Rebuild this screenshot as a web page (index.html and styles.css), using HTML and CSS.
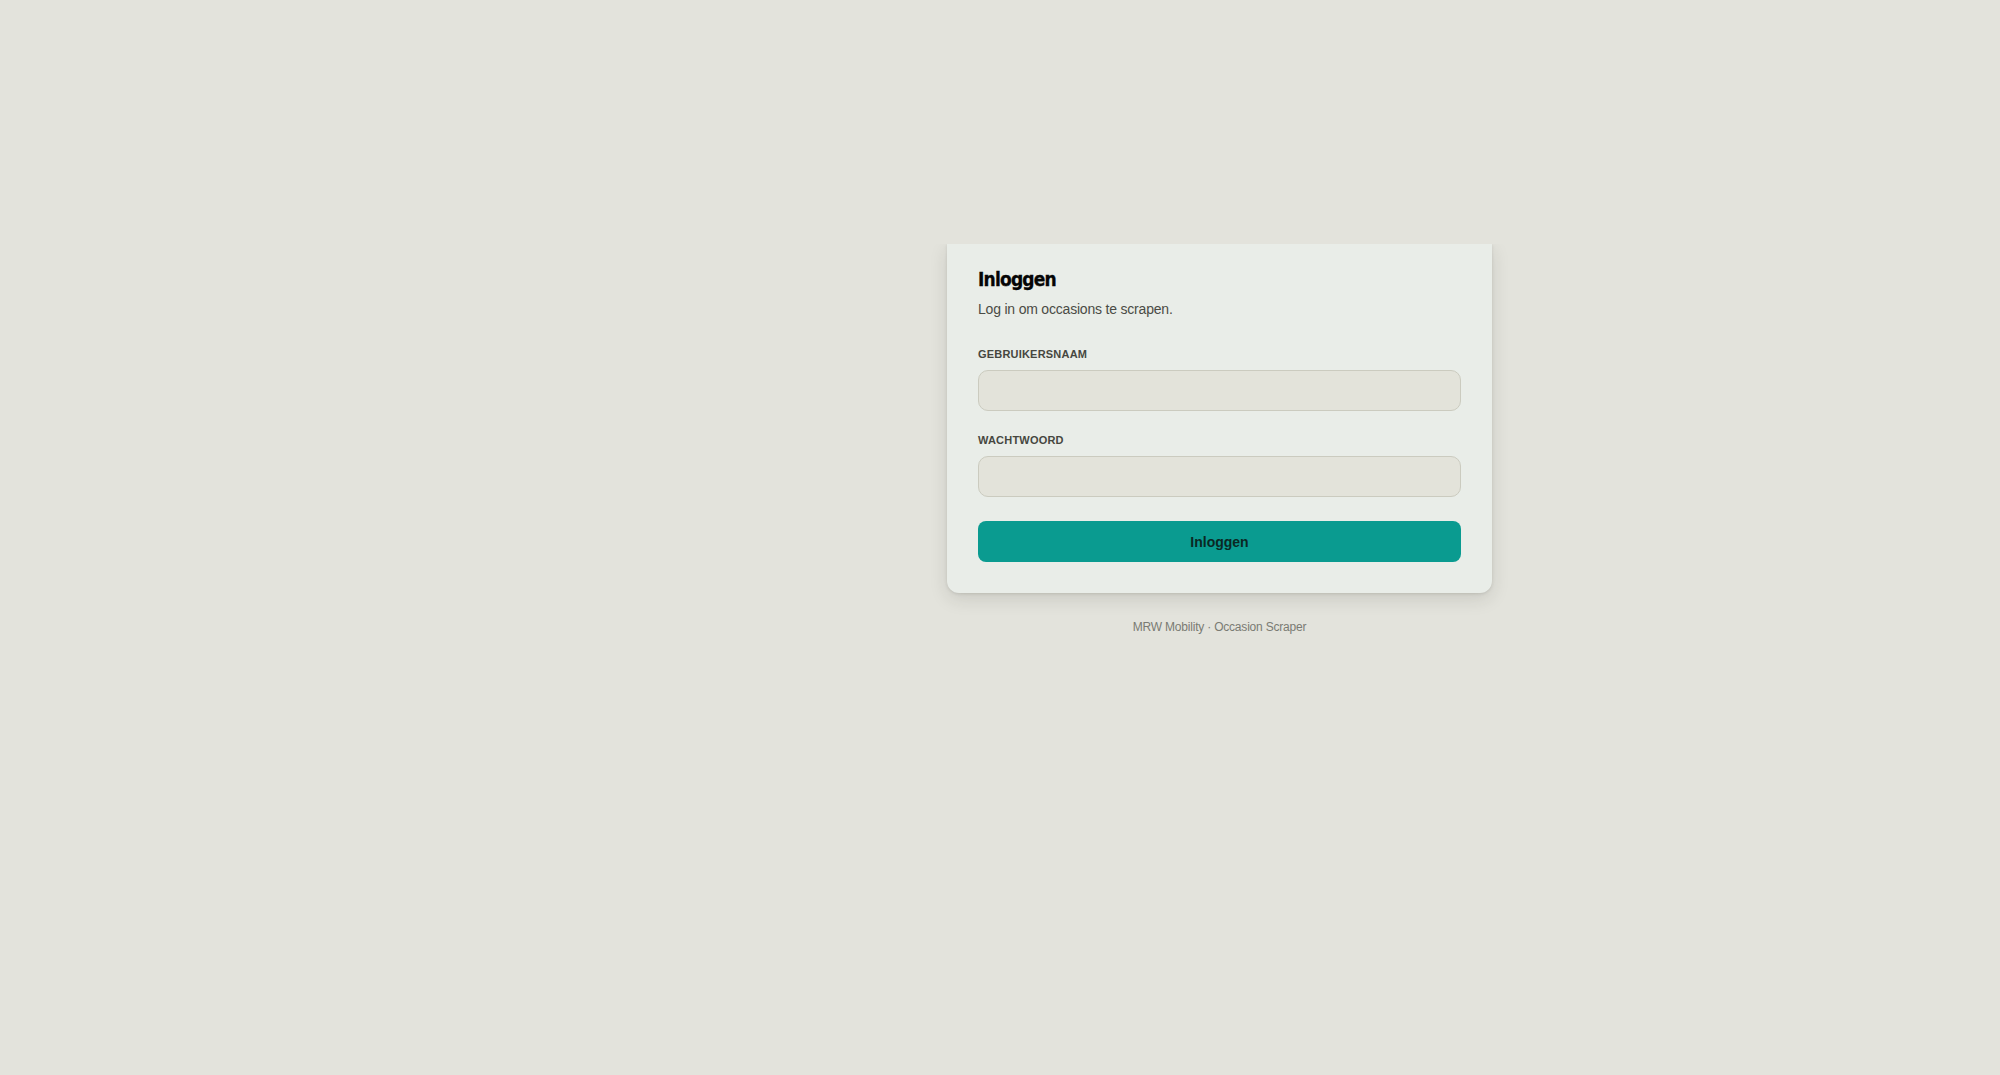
FILE: index.html
```html
<!DOCTYPE html>
<html lang="nl">
<head>
<meta charset="utf-8">
<title>Inloggen</title>
<link rel="stylesheet" href="styles.css">
</head>
<body>
<div class="page">
  <aside class="sidebar"></aside>
  <main class="main">
    <form class="card">
      <h1 class="title">Inloggen</h1>
      <p class="subtitle">Log in om occasions te scrapen.</p>
      <div class="field">
        <label class="label" for="user">Gebruikersnaam</label>
        <input class="input" id="user" type="text">
      </div>
      <div class="field">
        <label class="label" for="pass">Wachtwoord</label>
        <input class="input" id="pass" type="password">
      </div>
      <button class="button" type="button">Inloggen</button>
    </form>
    <p class="footer">MRW Mobility · Occasion Scraper</p>
  </main>
</div>
</body>
</html>
```

FILE: styles.css
```css
html, body {
  margin: 0;
  padding: 0;
}
body {
  background: #e3e3dc;
  font-family: "Liberation Sans", Arial, sans-serif;
  min-height: 100vh;
}
.page {
  display: grid;
  grid-template-columns: 439px 1fr;
  min-height: 100vh;
}
.main {
  display: flex;
  flex-direction: column;
  align-items: center;
  padding-top: 244px;
}
.card {
  width: 545px;
  box-sizing: border-box;
  padding: 23px 31px 31px;
  background: #e9ede8;
  border-radius: 0 0 12px 12px;
  box-shadow: 0 6px 18px rgba(40, 40, 30, 0.13), 0 1px 3px rgba(40, 40, 30, 0.12);
  clip-path: inset(0 -40px -40px -40px);
  display: flex;
  flex-direction: column;
}
.title {
  margin: 0;
  font-family: "DejaVu Sans Condensed", "DejaVu Sans", sans-serif;
  font-stretch: condensed;
  font-weight: 700;
  font-size: 19px;
  line-height: 24px;
  letter-spacing: -0.8px;
  color: #050505;
  -webkit-text-stroke: 0.3px #050505;
}
.subtitle {
  margin: 8px 0 0;
  font-size: 14px;
  line-height: 20px;
  letter-spacing: -0.2px;
  color: #4a4b45;
}
.field {
  display: flex;
  flex-direction: column;
}
.field + .field {
  margin-top: 22px;
}
.subtitle + .field {
  margin-top: 28px;
}
.label {
  font-size: 11px;
  line-height: 14px;
  font-weight: 700;
  letter-spacing: 0.2px;
  text-transform: uppercase;
  color: #46473f;
  margin-bottom: 9px;
}
.input {
  height: 41px;
  box-sizing: border-box;
  border: 1px solid #cbcbbf;
  border-radius: 10px;
  background: #e3e3da;
  padding: 0 12px;
  font-family: inherit;
  font-size: 14px;
  outline: none;
}
.button {
  margin-top: 24px;
  height: 41px;
  border: none;
  border-radius: 8px;
  background: #0a9b90;
  color: #0b2824;
  font-family: "Liberation Sans", Arial, sans-serif;
  font-weight: 700;
  font-size: 14px;
  cursor: pointer;
}
.footer {
  margin: 26px 0 0;
  font-size: 12px;
  line-height: 16px;
  letter-spacing: -0.2px;
  color: #7a7b73;
}
```
